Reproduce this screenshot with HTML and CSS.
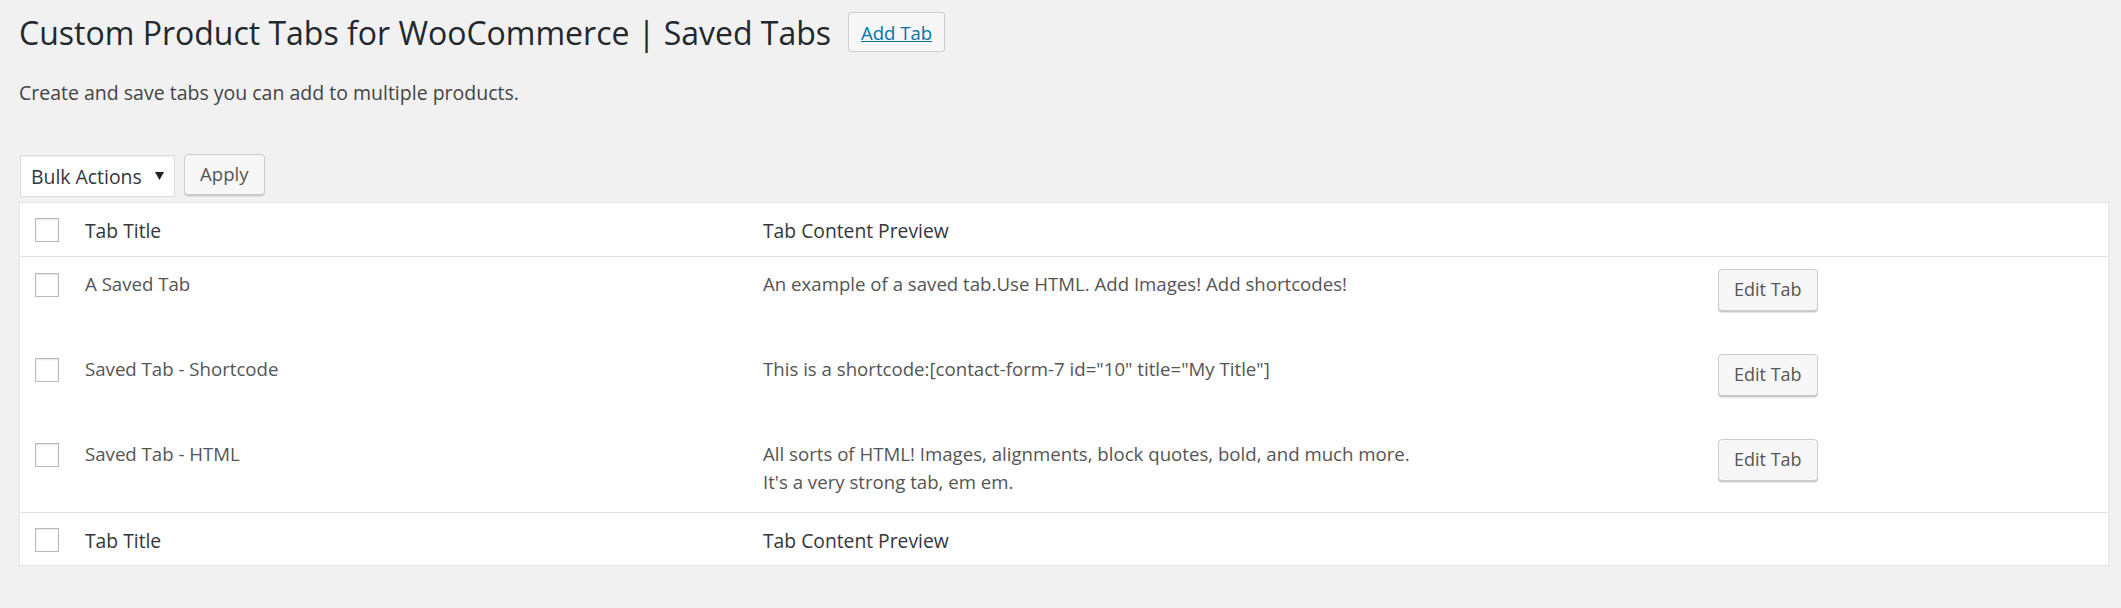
FILE: index.html
```html
<!DOCTYPE html>
<html lang="en">
<head>
<meta charset="utf-8">
<title>Saved Tabs</title>
<link rel="stylesheet" href="styles.css">
</head>
<body>
<div class="wrap">
  <div class="title-row">
    <h1 class="page-title">Custom Product Tabs for WooCommerce | Saved Tabs</h1>
    <a class="page-title-action" href="#">Add Tab</a>
  </div>
  <p class="description">Create and save tabs you can add to multiple products.</p>
  <div class="tablenav">
    <div class="bulk-select">
      <span>Bulk Actions</span>
      <svg class="arrow" width="9" height="8" viewBox="0 0 9 8"><polygon points="0,0 9,0 4.5,8"/></svg>
    </div>
    <button class="button apply">Apply</button>
  </div>
  <table class="widefat">
    <colgroup>
      <col class="c-check">
      <col class="c-title">
      <col class="c-content">
      <col class="c-action">
    </colgroup>
    <thead>
      <tr>
        <td class="check-column"><span class="cb"></span></td>
        <th>Tab Title</th>
        <th>Tab Content Preview</th>
        <th></th>
      </tr>
    </thead>
    <tbody>
      <tr>
        <td class="check-column"><span class="cb"></span></td>
        <td>A Saved Tab</td>
        <td>An example of a saved tab.Use HTML. Add Images! Add shortcodes!</td>
        <td class="action-cell"><button class="button">Edit Tab</button></td>
      </tr>
      <tr>
        <td class="check-column"><span class="cb"></span></td>
        <td>Saved Tab - Shortcode</td>
        <td>This is a shortcode:[contact-form-7 id="10" title="My Title"]</td>
        <td class="action-cell"><button class="button">Edit Tab</button></td>
      </tr>
      <tr>
        <td class="check-column"><span class="cb"></span></td>
        <td>Saved Tab - HTML</td>
        <td>All sorts of HTML! Images, alignments, block quotes, bold, and much more.<br>It's a very strong tab, em em.</td>
        <td class="action-cell"><button class="button">Edit Tab</button></td>
      </tr>
    </tbody>
    <tfoot>
      <tr>
        <td class="check-column"><span class="cb"></span></td>
        <th>Tab Title</th>
        <th>Tab Content Preview</th>
        <th></th>
      </tr>
    </tfoot>
  </table>
</div>
</body>
</html>
```

FILE: styles.css
```css
html, body {
  margin: 0;
  padding: 0;
  background: #f1f1f1;
}

body {
  font-family: "Open Sans", "Noto Sans", "DejaVu Sans", sans-serif;
  color: #444;
}

.wrap {
  padding: 0 12px 0 19px;
}

.title-row {
  display: flex;
  align-items: flex-start;
  padding-top: 11px;
}

.page-title {
  margin: 0;
  font-size: 32px;
  font-weight: 400;
  line-height: 44px;
  color: #23282d;
  white-space: nowrap;
}

.page-title-action {
  display: block;
  margin: 1px 0 0 17px;
  box-sizing: border-box;
  height: 40px;
  padding: 1px 12px 0;
  line-height: 37px;
  font-size: 18.5px;
  color: #0073aa;
  text-decoration: underline;
  background: #f7f7f7;
  border: 1px solid #ccc;
  border-radius: 3px;
}

.description {
  margin: 24px 0 0;
  font-size: 19.5px;
  line-height: 27px;
  color: #444;
}

.tablenav {
  display: flex;
  align-items: flex-start;
  margin-top: 48px;
}

.bulk-select {
  display: flex;
  align-items: center;
  justify-content: space-between;
  box-sizing: border-box;
  width: 155px;
  height: 42px;
  margin: 1px 0 0 1px;
  padding: 2px 10px 0 10px;
  line-height: 38px;
  font-size: 19.4px;
  color: #32373c;
  background: #fff;
  border: 1px solid #ddd;
  box-shadow: inset 0 1px 2px rgba(0, 0, 0, 0.07);
}

.bulk-select .arrow {
  fill: #222;
  margin-top: -2px;
}

.button {
  display: inline-block;
  box-sizing: border-box;
  height: 42px;
  padding: 0 15px 1.5px;
  margin: 0;
  font-family: inherit;
  font-size: 18px;
  line-height: 39px;
  color: #555;
  background: #f7f7f7;
  border: 1px solid #ccc;
  border-radius: 4px;
  box-shadow: 0 1.5px 0 #ccc;
  vertical-align: top;
  white-space: nowrap;
}

.button.apply {
  margin-left: 9px;
  height: 41px;
  font-size: 18.6px;
  line-height: 38px;
}

.widefat {
  width: 100%;
  margin-top: 5px;
  table-layout: fixed;
  border-collapse: separate;
  border-spacing: 0;
  background: #fff;
  border: 1px solid #e5e5e5;
  box-shadow: 0 1.5px 1.5px rgba(0, 0, 0, 0.04);
}

.c-check { width: 50px; }
.c-title { width: 678px; }
.c-content { width: 955px; }

.widefat th,
.widefat td {
  text-align: left;
  vertical-align: top;
  font-weight: 400;
}

.widefat thead th,
.widefat tfoot th {
  padding: 14px 15px 12px;
  font-size: 19.3px;
  line-height: 27px;
  color: #32373c;
}

.widefat tfoot th {
  padding-bottom: 11px;
}

.widefat thead th,
.widefat thead td {
  border-bottom: 1px solid #e1e1e1;
}

.widefat tfoot th,
.widefat tfoot td {
  border-top: 1px solid #e1e1e1;
}

.widefat tbody tr {
  height: 85px;
}

.widefat tbody td {
  padding: 12.5px 15px 0;
  font-size: 18.65px;
  line-height: 28.5px;
  color: #555;
}

.widefat .check-column {
  padding: 15px 0 0 15px;
}

.widefat tbody .check-column {
  padding: 16.3px 0 0 15px;
}

.widefat tbody .action-cell {
  padding-top: 12.3px;
}

.cb {
  display: block;
  box-sizing: border-box;
  width: 24px;
  height: 24px;
  background: #fff;
  border: 1px solid #b4b9be;
  box-shadow: inset 0 1px 2px rgba(0, 0, 0, 0.1);
}
```
